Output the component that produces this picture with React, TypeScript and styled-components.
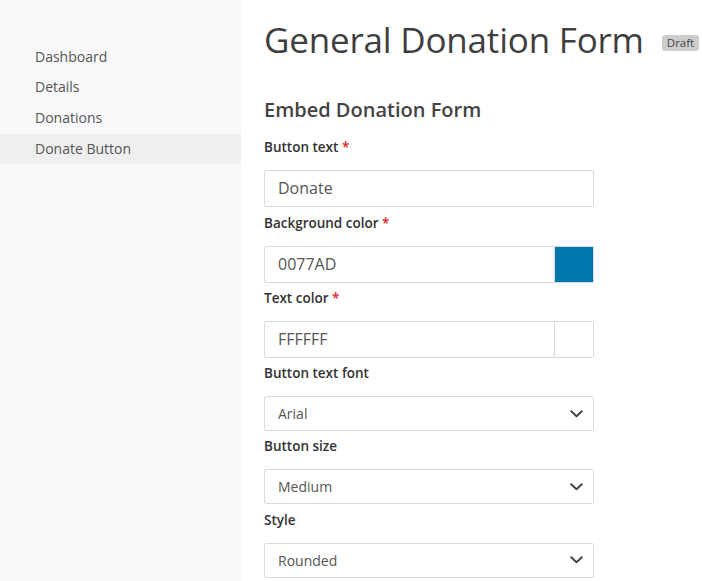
import React from "react";
import styled, { createGlobalStyle } from "styled-components";

const GlobalStyle = createGlobalStyle`
  html, body {
    margin: 0;
    padding: 0;
    background: #ffffff;
    font-family: "Open Sans", "Liberation Sans", sans-serif;
  }
  * { box-sizing: border-box; }
`;

const navItems = ["Dashboard", "Details", "Donations", "Donate Button"];

function Chevron() {
  return (
    <svg width="13" height="8" viewBox="0 0 13 8" fill="none">
      <path d="M1.2 1.2 L6.5 6.3 L11.8 1.2" stroke="#444" strokeWidth="1.9" strokeLinecap="round" strokeLinejoin="round" />
    </svg>
  );
}

function SelectField({ label, value }: { label: string; value: string }) {
  return (
    <Field>
      <Label>{label}</Label>
      <SelectBox>
        <SelectValue>{value}</SelectValue>
        <Chevron />
      </SelectBox>
    </Field>
  );
}

function ColorField({ label, value, swatch }: { label: string; value: string; swatch: string }) {
  return (
    <Field>
      <Label>
        {label} <Req>*</Req>
      </Label>
      <InputGroup>
        <TextValue>{value}</TextValue>
        <Swatch $color={swatch} />
      </InputGroup>
    </Field>
  );
}

export default function App() {
  return (
    <>
      <GlobalStyle />
      <Page>
        <Sidebar>
          <NavList>
            {navItems.map((item) => (
              <NavItem key={item} $active={item === "Donate Button"}>
                {item}
              </NavItem>
            ))}
          </NavList>
        </Sidebar>
        <Main>
          <TitleRow>
            <Title>General Donation Form</Title>
            <Badge>Draft</Badge>
          </TitleRow>
          <SubTitle>Embed Donation Form</SubTitle>
          <Fields>
            <Field>
              <Label>
                Button text <Req>*</Req>
              </Label>
              <InputGroup>
                <TextValue>Donate</TextValue>
              </InputGroup>
            </Field>
            <ColorField label="Background color" value="0077AD" swatch="#0077ad" />
            <ColorField label="Text color" value="FFFFFF" swatch="#ffffff" />
            <SelectField label="Button text font" value="Arial" />
            <SelectField label="Button size" value="Medium" />
            <SelectField label="Style" value="Rounded" />
          </Fields>
        </Main>
      </Page>
    </>
  );
}

const Page = styled.div`
  display: flex;
  width: 702px;
  height: 581px;
  overflow: hidden;
`;

const Sidebar = styled.div`
  width: 241px;
  flex-shrink: 0;
  background: #f8f8fa;
  padding-top: 41.5px;
`;

const NavList = styled.div`
  display: flex;
  flex-direction: column;
`;

const NavItem = styled.div<{ $active?: boolean }>`
  height: 30.7px;
  line-height: 30.7px;
  padding-left: 35px;
  font-size: 14px;
  color: #555;
  background: ${(p) => (p.$active ? "#efefef" : "transparent")};
`;

const Main = styled.div`
  flex: 1;
  padding: 16px 0 0 23px;
`;

const TitleRow = styled.div`
  display: flex;
  align-items: center;
  gap: 18px;
  height: 46px;
`;

const Title = styled.h1`
  margin: 0;
  font-size: 35px;
  font-weight: 400;
  color: #3f3f3f;
  white-space: nowrap;
  letter-spacing: -0.2px;
`;

const Badge = styled.span`
  display: inline-block;
  margin-top: 8px;
  padding: 0 5px;
  height: 16px;
  line-height: 16px;
  font-size: 11.5px;
  color: #444;
  background: #cdcdcd;
  border-radius: 3px;
`;

const SubTitle = styled.h2`
  margin: 33px 0 0;
  height: 30px;
  line-height: 30px;
  font-size: 20px;
  font-weight: 600;
  color: #444;
`;

const Fields = styled.div`
  display: flex;
  flex-direction: column;
  padding-top: 7px;
`;

const Field = styled.div`
  display: flex;
  flex-direction: column;
  width: 330px;
  margin-top: 5.3px;
`;

const Label = styled.div`
  height: 20px;
  line-height: 20px;
  font-size: 13.5px;
  font-weight: 600;
  color: #333;
  margin-bottom: 13px;
`;

const Req = styled.span`
  color: #e02020;
`;

const InputGroup = styled.div`
  display: flex;
  height: 37px;
  border: 1px solid #d8dce0;
  border-radius: 2px;
  background: #fff;
`;

const TextValue = styled.div`
  flex: 1;
  padding-left: 13px;
  line-height: 35px;
  font-size: 16px;
  color: #555;
`;

const Swatch = styled.div<{ $color: string }>`
  width: 39px;
  background: ${(p) => p.$color};
  border-left: 1px solid #d8dce0;
`;

const SelectBox = styled.div`
  display: flex;
  align-items: center;
  justify-content: space-between;
  height: 35px;
  padding: 0 10px 0 13px;
  border: 1px solid #d8dce0;
  border-radius: 2px;
  background: #fff;
`;

const SelectValue = styled.span`
  font-size: 14px;
  color: #555;
`;
